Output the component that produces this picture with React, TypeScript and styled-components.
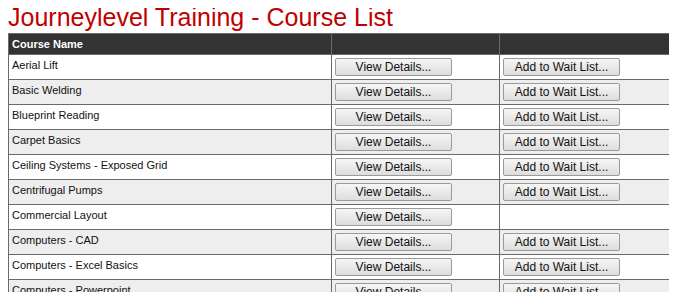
import React from "react";
import styled, { createGlobalStyle } from "styled-components";

const GlobalStyle = createGlobalStyle`
  body {
    margin: 8px;
    background: #fff;
    font-family: "Liberation Sans", Arial, sans-serif;
  }
`;

const Title = styled.h1`
  margin: 0 0 7px;
  font-size: 25px;
  line-height: 18px;
  font-weight: normal;
  color: #c00000;
`;

const Table = styled.table`
  width: 661px;
  border-collapse: collapse;
  table-layout: fixed;
  font-size: 11px;
  color: #111;
`;

const HeadCell = styled.th`
  height: 20px;
  padding: 0 3px;
  background: #333;
  color: #fff;
  font-weight: bold;
  text-align: left;
  border: 1px solid #6a6a6a;
`;

const Row = styled.tr<{ $alt: boolean }>`
  background: ${(p) => (p.$alt ? "#eeeeee" : "#ffffff")};
`;

const NameCell = styled.td`
  height: 18px;
  padding: 4px 3px 2px;
  vertical-align: top;
  border: 1px solid #6a6a6a;
`;

const ActionCell = styled.td`
  height: 18px;
  padding: 3px;
  vertical-align: top;
  border: 1px solid #6a6a6a;
`;

const Button = styled.button`
  display: block;
  width: 117px;
  height: 18px;
  padding: 0;
  border: 1px solid #9a9a9a;
  border-radius: 2px;
  background: linear-gradient(#f6f6f6, #dddddd);
  font-family: "Liberation Sans", Arial, sans-serif;
  font-size: 12px;
  line-height: 16px;
  color: #111;
  text-align: center;
`;

type Course = { name: string; waitList: boolean };

const courses: Course[] = [
  { name: "Aerial Lift", waitList: true },
  { name: "Basic Welding", waitList: true },
  { name: "Blueprint Reading", waitList: true },
  { name: "Carpet Basics", waitList: true },
  { name: "Ceiling Systems - Exposed Grid", waitList: true },
  { name: "Centrifugal Pumps", waitList: true },
  { name: "Commercial Layout", waitList: false },
  { name: "Computers - CAD", waitList: true },
  { name: "Computers - Excel Basics", waitList: true },
  { name: "Computers - Powerpoint", waitList: true },
];

export default function App() {
  return (
    <>
      <GlobalStyle />
      <Title>Journeylevel Training - Course List</Title>
      <Table>
        <colgroup>
          <col style={{ width: 323 }} />
          <col style={{ width: 168 }} />
          <col style={{ width: 170 }} />
        </colgroup>
        <thead>
          <tr>
            <HeadCell>Course Name</HeadCell>
            <HeadCell />
            <HeadCell />
          </tr>
        </thead>
        <tbody>
          {courses.map((c, i) => (
            <Row key={c.name} $alt={i % 2 === 1}>
              <NameCell>{c.name}</NameCell>
              <ActionCell>
                <Button>View Details...</Button>
              </ActionCell>
              <ActionCell>{c.waitList && <Button>Add to Wait List...</Button>}</ActionCell>
            </Row>
          ))}
        </tbody>
      </Table>
    </>
  );
}
